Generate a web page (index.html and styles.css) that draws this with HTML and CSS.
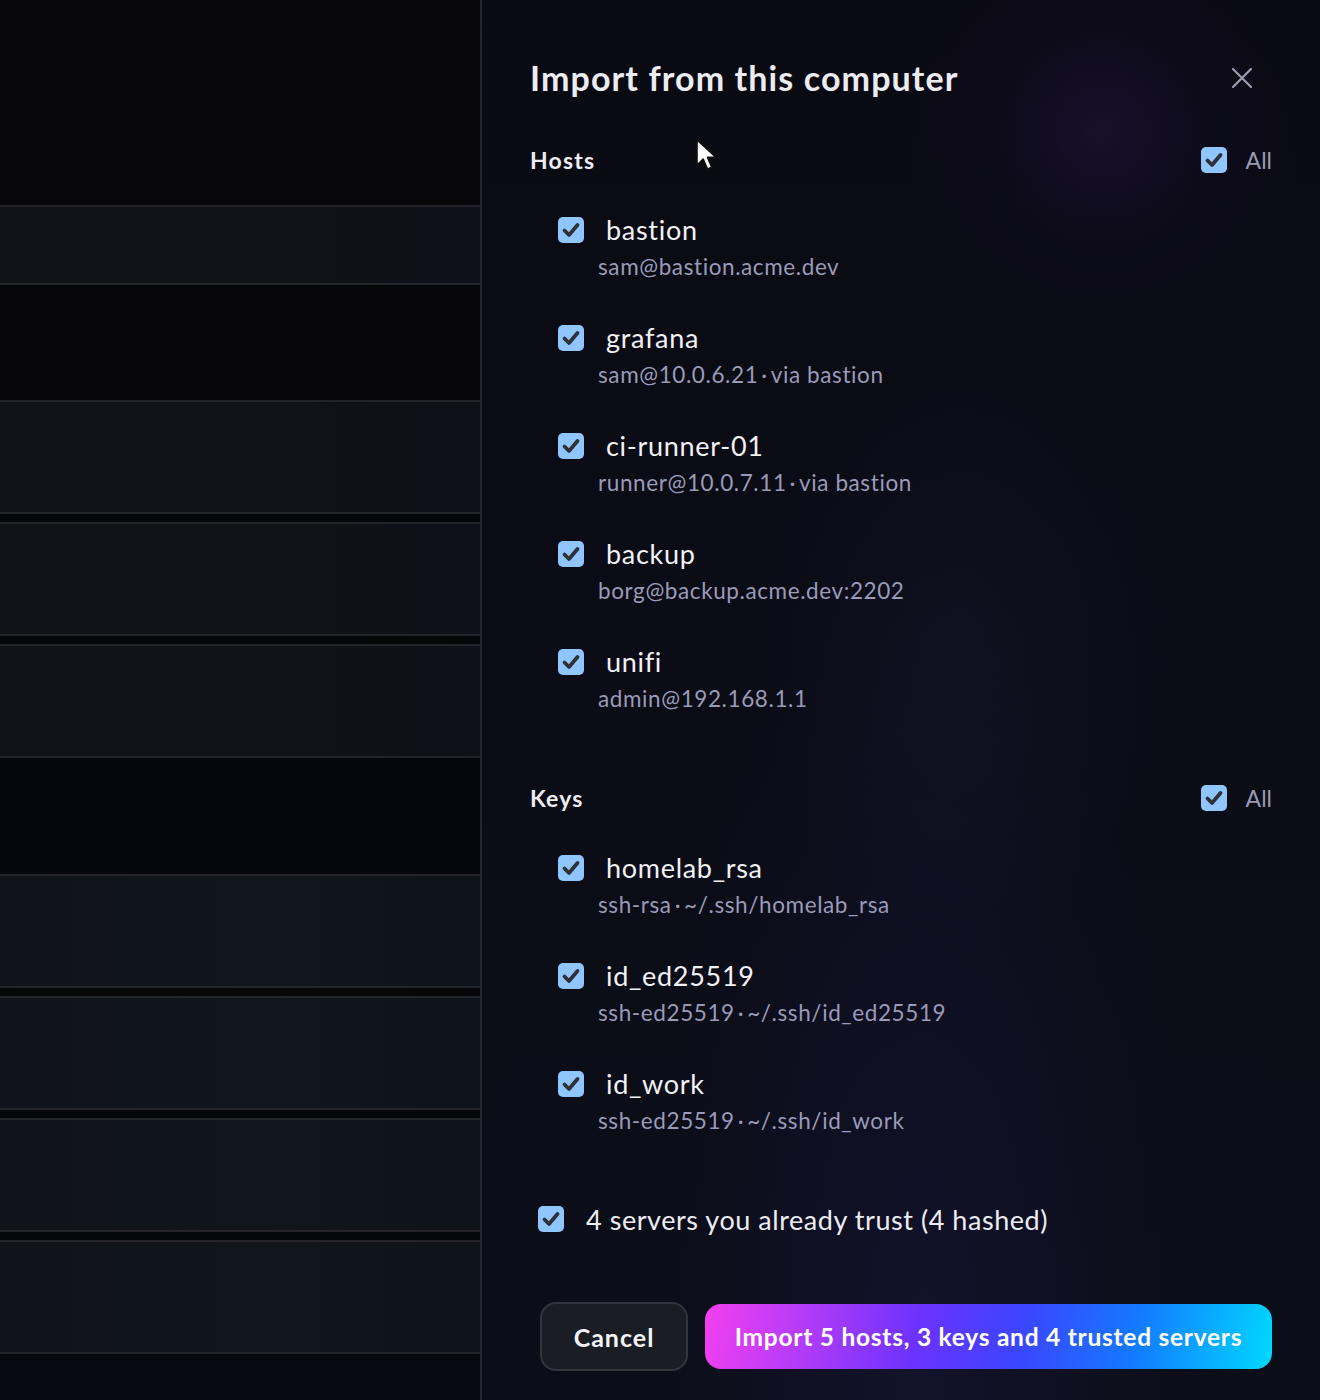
FILE: index.html
```html
<!DOCTYPE html>
<html lang="en">
<head>
<meta charset="utf-8">
<title>Import from this computer</title>
<link rel="stylesheet" href="styles.css">
</head>
<body>
<div class="app">
  <div class="backdrop">
    <div class="gap gap-top"></div>
    <div class="card card-short"></div>
    <div class="gap gap-tall"></div>
    <div class="card"></div>
    <div class="gap"></div>
    <div class="card"></div>
    <div class="gap"></div>
    <div class="card"></div>
    <div class="gap gap-tall2"></div>
    <div class="card card-cool"></div>
    <div class="gap"></div>
    <div class="card card-cool"></div>
    <div class="gap"></div>
    <div class="card card-cool"></div>
    <div class="gap"></div>
    <div class="card card-cool"></div>
    <div class="gap gap-end"></div>
  </div>

  <aside class="drawer">
    <header class="drawer-head">
      <h1 class="title">Import from this computer</h1>
      <button class="close" aria-label="Close">
        <svg width="22" height="22" viewBox="0 0 22 22"><path d="M2 2L20 20M20 2L2 20" stroke="#9c9cb2" stroke-width="2.2" stroke-linecap="round"/></svg>
      </button>
    </header>

    <section class="group">
      <div class="group-head">
        <h2 class="group-title">Hosts</h2>
        <label class="all"><span class="box"><svg viewBox="0 0 26 26"><path d="M6.5 13.5l4.5 4.5 8.5-10" fill="none" stroke="#2f3137" stroke-width="3.8" stroke-linecap="round" stroke-linejoin="round"/></svg></span>All</label>
      </div>
      <ul class="items">
        <li class="item">
          <div class="item-main"><span class="box"><svg viewBox="0 0 26 26"><path d="M6.5 13.5l4.5 4.5 8.5-10" fill="none" stroke="#2f3137" stroke-width="3.8" stroke-linecap="round" stroke-linejoin="round"/></svg></span><span class="name">bastion</span></div>
          <div class="meta">sam@bastion.acme.dev</div>
        </li>
        <li class="item">
          <div class="item-main"><span class="box"><svg viewBox="0 0 26 26"><path d="M6.5 13.5l4.5 4.5 8.5-10" fill="none" stroke="#2f3137" stroke-width="3.8" stroke-linecap="round" stroke-linejoin="round"/></svg></span><span class="name">grafana</span></div>
          <div class="meta">sam@10.0.6.21<span class="sep">·</span>via bastion</div>
        </li>
        <li class="item">
          <div class="item-main"><span class="box"><svg viewBox="0 0 26 26"><path d="M6.5 13.5l4.5 4.5 8.5-10" fill="none" stroke="#2f3137" stroke-width="3.8" stroke-linecap="round" stroke-linejoin="round"/></svg></span><span class="name">ci-runner-01</span></div>
          <div class="meta">runner@10.0.7.11<span class="sep">·</span>via bastion</div>
        </li>
        <li class="item">
          <div class="item-main"><span class="box"><svg viewBox="0 0 26 26"><path d="M6.5 13.5l4.5 4.5 8.5-10" fill="none" stroke="#2f3137" stroke-width="3.8" stroke-linecap="round" stroke-linejoin="round"/></svg></span><span class="name">backup</span></div>
          <div class="meta">borg@backup.acme.dev:2202</div>
        </li>
        <li class="item">
          <div class="item-main"><span class="box"><svg viewBox="0 0 26 26"><path d="M6.5 13.5l4.5 4.5 8.5-10" fill="none" stroke="#2f3137" stroke-width="3.8" stroke-linecap="round" stroke-linejoin="round"/></svg></span><span class="name">unifi</span></div>
          <div class="meta">admin@192.168.1.1</div>
        </li>
      </ul>
    </section>

    <section class="group group-keys">
      <div class="group-head">
        <h2 class="group-title">Keys</h2>
        <label class="all"><span class="box"><svg viewBox="0 0 26 26"><path d="M6.5 13.5l4.5 4.5 8.5-10" fill="none" stroke="#2f3137" stroke-width="3.8" stroke-linecap="round" stroke-linejoin="round"/></svg></span>All</label>
      </div>
      <ul class="items">
        <li class="item">
          <div class="item-main"><span class="box"><svg viewBox="0 0 26 26"><path d="M6.5 13.5l4.5 4.5 8.5-10" fill="none" stroke="#2f3137" stroke-width="3.8" stroke-linecap="round" stroke-linejoin="round"/></svg></span><span class="name">homelab_rsa</span></div>
          <div class="meta">ssh-rsa<span class="sep">·</span>~/.ssh/homelab_rsa</div>
        </li>
        <li class="item">
          <div class="item-main"><span class="box"><svg viewBox="0 0 26 26"><path d="M6.5 13.5l4.5 4.5 8.5-10" fill="none" stroke="#2f3137" stroke-width="3.8" stroke-linecap="round" stroke-linejoin="round"/></svg></span><span class="name">id_ed25519</span></div>
          <div class="meta">ssh-ed25519<span class="sep">·</span>~/.ssh/id_ed25519</div>
        </li>
        <li class="item">
          <div class="item-main"><span class="box"><svg viewBox="0 0 26 26"><path d="M6.5 13.5l4.5 4.5 8.5-10" fill="none" stroke="#2f3137" stroke-width="3.8" stroke-linecap="round" stroke-linejoin="round"/></svg></span><span class="name">id_work</span></div>
          <div class="meta">ssh-ed25519<span class="sep">·</span>~/.ssh/id_work</div>
        </li>
      </ul>
    </section>

    <label class="trust"><span class="box"><svg viewBox="0 0 26 26"><path d="M6.5 13.5l4.5 4.5 8.5-10" fill="none" stroke="#2f3137" stroke-width="3.8" stroke-linecap="round" stroke-linejoin="round"/></svg></span>4 servers you already trust (4 hashed)</label>

    <footer class="actions">
      <button class="btn btn-cancel">Cancel</button>
      <button class="btn btn-import">Import 5 hosts, 3 keys and 4 trusted servers</button>
    </footer>

    <svg class="pointer" width="24" height="34" viewBox="0 0 24 34"><path d="M2 2v25l6.2-6 4.3 10 4.2-1.8-4.2-9.8h8.6z" fill="#ffffff" stroke="#111" stroke-width="1.6" stroke-linejoin="round"/></svg>
  </aside>
</div>
</body>
</html>
```

FILE: styles.css
```css
* { box-sizing: border-box; }

html, body {
  margin: 0;
  padding: 0;
  background: #07070b;
}

body {
  font-family: "Lato", "Noto Sans", sans-serif;
  color: #ececf3;
}

.app {
  display: flex;
  width: 1320px;
  height: 1400px;
  overflow: hidden;
}

/* dimmed list behind the drawer */
.backdrop {
  width: 480px;
  flex: none;
  display: flex;
  flex-direction: column;
  background: #06070b;
}

.gap { height: 8px; background: #06070a; }
.gap-top { height: 205px; background: #07070c; }
.gap-tall { height: 115px; background: #06060a; }
.gap-tall2 { height: 116px; background: #05070c; }
.gap-end { flex: 1; background: #060910; }

.card {
  height: 114px;
  border-top: 2px solid #23252b;
  border-bottom: 2px solid #23252b;
  background: linear-gradient(90deg, #111218 0%, #111217 60%, #0f1018 100%);
}
.card-short { height: 80px; }
.card-cool {
  background: linear-gradient(90deg, #10141a 0%, #10161c 60%, #0e131a 100%);
}

/* drawer */
.drawer {
  position: relative;
  flex: 1;
  border-left: 2px solid #24252d;
  padding: 58px 48px 0 48px;
  display: flex;
  flex-direction: column;
  background:
    radial-gradient(circle at 620px 130px, rgba(70, 30, 130, 0.24) 0, rgba(40, 20, 90, 0.1) 100px, rgba(0, 0, 0, 0) 200px),
    radial-gradient(ellipse at 480px 640px, rgba(35, 35, 70, 0.2) 0, rgba(0, 0, 0, 0) 200px),
    radial-gradient(ellipse at 440px 1360px, rgba(40, 30, 100, 0.25) 0, rgba(0, 0, 0, 0) 260px),
    linear-gradient(180deg, #0a0a12 0%, #0b0c16 50%, #0b0e18 100%);
}

.drawer-head {
  display: flex;
  align-items: center;
  justify-content: space-between;
  height: 40px;
}

.title {
  margin: 0;
  font-size: 34px;
  font-weight: 700;
  line-height: 40px;
  color: #ececf3;
  letter-spacing: 1.1px;
}

.close {
  width: 22px;
  height: 22px;
  padding: 0;
  margin-right: 19px;
  border: 0;
  background: none;
  display: flex;
}

.group { margin-top: 47px; }
.group-keys { margin-top: 70px; }

.group-head {
  display: flex;
  align-items: center;
  justify-content: space-between;
  height: 30px;
}

.group-title {
  margin: 0;
  font-size: 23px;
  font-weight: 700;
  line-height: 30px;
  color: #ececf3;
  letter-spacing: 1.2px;
}

.box {
  width: 26px;
  height: 26px;
  flex: none;
  border-radius: 5px;
  background: #8fc6ff;
  display: flex;
}
.box svg { width: 26px; height: 26px; }

.all {
  display: flex;
  align-items: center;
  gap: 19px;
  font-size: 23px;
  line-height: 30px;
  color: #9a9ab4;
}

.items {
  list-style: none;
  margin: 39px 0 0 0;
  padding: 0;
  display: flex;
  flex-direction: column;
  gap: 41px;
}

.item { padding-left: 28px; }

.item-main {
  display: flex;
  align-items: center;
  gap: 22px;
  height: 32px;
}

.name {
  font-size: 27px;
  line-height: 32px;
  color: #f1f1f6;
  letter-spacing: 0.7px;
}

.meta {
  margin: 7px 0 0 40px;
  font-size: 22.5px;
  line-height: 28px;
  color: #9a9bb8;
  letter-spacing: 0.6px;
}

.sep { margin: 0 3px; }

.trust {
  margin-top: 68px;
  padding-left: 8px;
  display: flex;
  align-items: center;
  gap: 22px;
  height: 32px;
  font-size: 27px;
  color: #ececf3;
  letter-spacing: 0.55px;
}

.actions {
  margin-top: 67px;
  padding-left: 10px;
  display: flex;
  align-items: center;
  gap: 17px;
}

.btn {
  font-family: "Lato", "Noto Sans", sans-serif;
  font-weight: 700;
  font-size: 24px;
  color: #f4f4f8;
  border: 0;
  cursor: pointer;
}

.btn-cancel {
  width: 148px;
  height: 69px;
  border-radius: 16px;
  background: #1b1d24;
  border: 2px solid #33353d;
  font-size: 25px;
  letter-spacing: 1px;
}

.btn-import {
  flex: 1;
  height: 65px;
  border-radius: 16px;
  background: linear-gradient(100deg, #f33ff0 0%, #b93cf7 16%, #6a32fd 38%, #3b46ff 56%, #1478ff 75%, #00d8ff 100%);
  color: #ffffff;
  font-size: 24.5px;
  letter-spacing: 0.75px;
}

.pointer {
  position: absolute;
  left: 213px;
  top: 138px;
}
```
